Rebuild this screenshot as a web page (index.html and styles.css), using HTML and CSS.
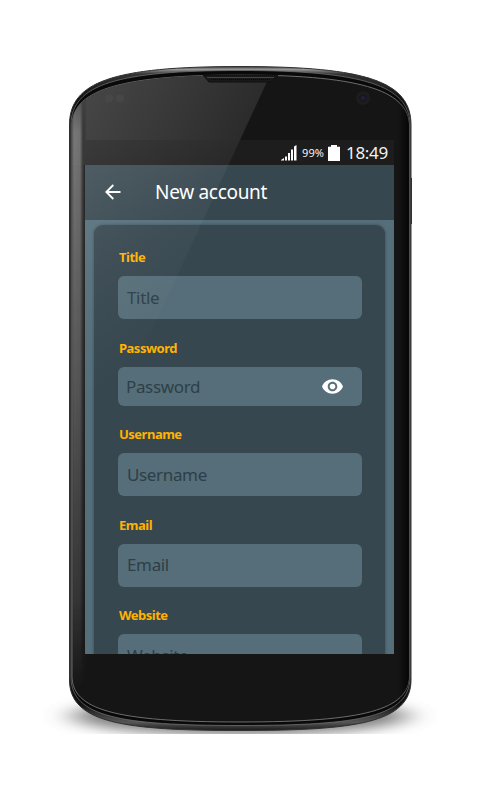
FILE: index.html
```
<!DOCTYPE html>
<html lang="en">
<head>
<meta charset="utf-8">
<title>New account</title>
<link rel="stylesheet" href="styles.css">
</head>
<body>
<div class="stage">
  <svg class="device" viewBox="0 0 480 800" aria-hidden="true">
    <defs>
      <linearGradient id="rim" x1="0" y1="66" x2="0" y2="731" gradientUnits="userSpaceOnUse">
        <stop offset="0" stop-color="#222"/><stop offset=".005" stop-color="#999"/><stop offset=".012" stop-color="#333"/><stop offset=".05" stop-color="#111"/>
        <stop offset=".96" stop-color="#111"/><stop offset=".987" stop-color="#555"/><stop offset="1" stop-color="#161616"/>
      </linearGradient>
      <linearGradient id="side" x1="71" y1="0" x2="86" y2="0" gradientUnits="userSpaceOnUse">
        <stop offset="0" stop-color="#444"/><stop offset=".2" stop-color="#777"/><stop offset=".6" stop-color="#707070"/><stop offset=".8" stop-color="#383838"/><stop offset="1" stop-color="#333" stop-opacity=".4"/>
      </linearGradient>
      <linearGradient id="edge" x1="398" y1="0" x2="409" y2="0" gradientUnits="userSpaceOnUse">
        <stop offset="0" stop-color="#050505" stop-opacity="0"/><stop offset="1" stop-color="#050505"/>
      </linearGradient>
      <linearGradient id="fade" x1="0" y1="90" x2="0" y2="690" gradientUnits="userSpaceOnUse">
        <stop offset="0" stop-color="#333"/><stop offset=".07" stop-color="#fff"/><stop offset=".5" stop-color="#aaa"/><stop offset=".85" stop-color="#555"/><stop offset="1" stop-color="#000"/>
      </linearGradient>
      <linearGradient id="glare" x1="100" y1="80" x2="240" y2="155" gradientUnits="userSpaceOnUse">
        <stop offset="0" stop-color="#454545"/><stop offset="1" stop-color="#2a2a2a"/>
      </linearGradient>
      <mask id="sidemask"><rect width="480" height="800" fill="url(#fade)"/></mask>
      <filter id="soft" x="-20%" y="-100%" width="140%" height="300%"><feGaussianBlur stdDeviation="15 6"/></filter>
      <clipPath id="floor"><rect y="660" width="480" height="74"/></clipPath>
      <clipPath id="glass"><path d="M72 125C73 93 111 75 240 75S408 93 409 125V677C408 709 367 722 240 722S73 709 72 677Z"/></clipPath>
    </defs>
    <g clip-path="url(#floor)">
      <ellipse cx="240" cy="716" rx="168" ry="19" fill="#555" opacity=".75" filter="url(#soft)"/>
    </g>
    <rect x="410" y="178" width="2" height="46" fill="#333"/>
    <path d="M69.500 125C69.500 82 112 66.500 240 66.500S411 82 411 125V680C411 723 355 730.500 240 730.500S69.500 723 69.500 680Z" fill="url(#rim)" stroke="#303030"/>
    <path d="M71 124C72 85 116 70.500 240 70.500S409 86 410 124V678C409 716 362 725.500 240 725.500S72 716 71 678Z" fill="#090909" stroke="#777" stroke-width=".7"/>
    <path d="M72 125C73 93 111 75 240 75S408 93 409 125V677C408 709 367 722 240 722S73 709 72 677Z" fill="#151515" stroke="#777" stroke-width=".9"/>
    <g clip-path="url(#glass)">
      <path d="M70 60H277L240 140V165H70Z" fill="url(#glare)"/>
      <path d="M70 90H86V700H70Z" fill="url(#side)" mask="url(#sidemask)"/>
      <path d="M398 90H410V710H398Z" fill="url(#edge)"/>
    </g>
    <path d="M203 75L209 82H271L278 75Z" fill="#191919" stroke="#111"/>
    <path d="M207 77.500H274" stroke="#444"/>
    <path d="M211 79.500H270" stroke="#080808" stroke-dasharray="1 1"/>
    <circle cx="109" cy="98.500" r="4" fill="#4b4b4b" opacity=".6"/><circle cx="120" cy="98.500" r="4" fill="#4b4b4b" opacity=".6"/>
    <circle cx="363" cy="98" r="7" fill="#1d1d1d"/><circle cx="363" cy="98" r="4" fill="#191822"/><circle cx="363" cy="98" r="1.800" fill="#232040"/>
  </svg>

  <main class="screen">
    <div class="status">
      <svg class="signal" viewBox="0 0 16 16"><path d="M0 15L3 13V15.500H0ZM4 11.500H6V15.500H4ZM7 8H9V15.500H7ZM10 4.500H12V15.500H10ZM13 1.500L15.500 0V15.500H13Z" fill="#fff"/></svg>
      <span class="percent">99%</span>
      <svg class="battery" viewBox="0 0 12 16"><path d="M0 1.800H3V0H9V1.800H12V16H0Z" fill="#fff"/></svg>
      <span class="clock">18:49</span>
    </div>
    <header class="bar">
      <svg class="back" viewBox="0 0 16 16"><path d="M15.500 8H1.500M8.300 1L1.300 8L8.300 15" fill="none" stroke="#fff" stroke-width="1.800"/></svg>
      <h1 class="heading">New account</h1>
    </header>
    <div class="content">
      <form class="card">
        <div class="field"><label class="label">Title</label><div class="input"><span class="hint">Title</span></div></div>
        <div class="field"><label class="label">Password</label><div class="input input-secret"><span class="hint">Password</span>
          <svg class="eye" viewBox="1 4.500 22 15"><path fill="#fff" d="M12 4.500C7 4.500 2.730 7.610 1 12c1.730 4.390 6 7.500 11 7.500s9.270-3.110 11-7.500c-1.730-4.390-6-7.500-11-7.500zM12 17c-2.760 0-5-2.240-5-5s2.240-5 5-5 5 2.240 5 5-2.240 5-5 5zm0-8c-1.660 0-3 1.340-3 3s1.340 3 3 3 3-1.340 3-3-1.340-3-3-3z"/></svg></div></div>
        <div class="field"><label class="label">Username</label><div class="input"><span class="hint">Username</span></div></div>
        <div class="field"><label class="label">Email</label><div class="input"><span class="hint">Email</span></div></div>
        <div class="field"><label class="label">Website</label><div class="input"><span class="hint">Website</span></div></div>
      </form>
    </div>
    <div class="reflection"></div>
  </main>
</div>
</body>
</html>
```
FILE: styles.css
```
* { box-sizing: border-box; }
body { margin: 0; background: #fff; font-family: "Noto Sans", sans-serif; }
.stage { position: relative; width: 480px; height: 800px; padding: 140px 86px 0 85px; overflow: hidden; }
.device { position: absolute; inset: 0; width: 480px; height: 800px; }
.screen { position: relative; display: flex; flex-direction: column; width: 309px; height: 514px; overflow: hidden; }
.status { display: flex; flex: none; align-items: center; justify-content: flex-end; height: 25px; padding-right: 6px; color: #f2f2f2; background: #1d1d1d; }
.signal { width: 16px; height: 16px; margin-right: 5px; }
.percent { width: 23px; margin-right: 3px; font-size: 11px; line-height: 25px; letter-spacing: .1px; white-space: nowrap; }
.battery { width: 12px; height: 16px; margin-right: 6px; }
.clock { width: 42px; font-size: 17px; line-height: 25px; letter-spacing: -.3px; white-space: nowrap; }
.bar { display: flex; flex: none; align-items: center; height: 55px; padding: 0 0 1px 20px; background: #37474f; }
.back { width: 16px; height: 16px; margin-right: 34px; }
.heading { margin: 0; font-size: 19px; font-weight: 400; line-height: 28px; letter-spacing: -.3px; color: #fff; white-space: nowrap; }
.content { flex: 1; min-height: 0; padding: 5px 9px 0; background: #546e7a; }
.card { height: 520px; padding: 22px 23px 0 24px; border-radius: 9px; background: #37474f; box-shadow: 0 0 3px #37474f; }
.field { display: flex; flex-direction: column; margin-bottom: 18.500px; }
.label { height: 20px; margin: 0 0 9px 1px; font-size: 13px; font-weight: 700; line-height: 20px; letter-spacing: -.5px; color: #ffb300; }
.input { display: flex; align-items: center; justify-content: space-between; height: 43px; padding: 0 19px 0 9px; border-radius: 6px; background: #566e79; }
.input-secret { height: 39px; padding-left: 8px; }
.hint { font-size: 17px; line-height: 26px; letter-spacing: -.35px; color: #2d3f48; }
.input-secret .hint { padding-top: 1px; }
.eye { width: 21px; height: 15px; }
.reflection { position: absolute; inset: 0; pointer-events: none; clip-path: polygon(0 0, 155px 0, 50px 227px, 0 300px);
  background: linear-gradient(145deg, rgba(255,255,255,.13), rgba(255,255,255,.045) 115px, rgba(255,255,255,0) 215px); }
```
